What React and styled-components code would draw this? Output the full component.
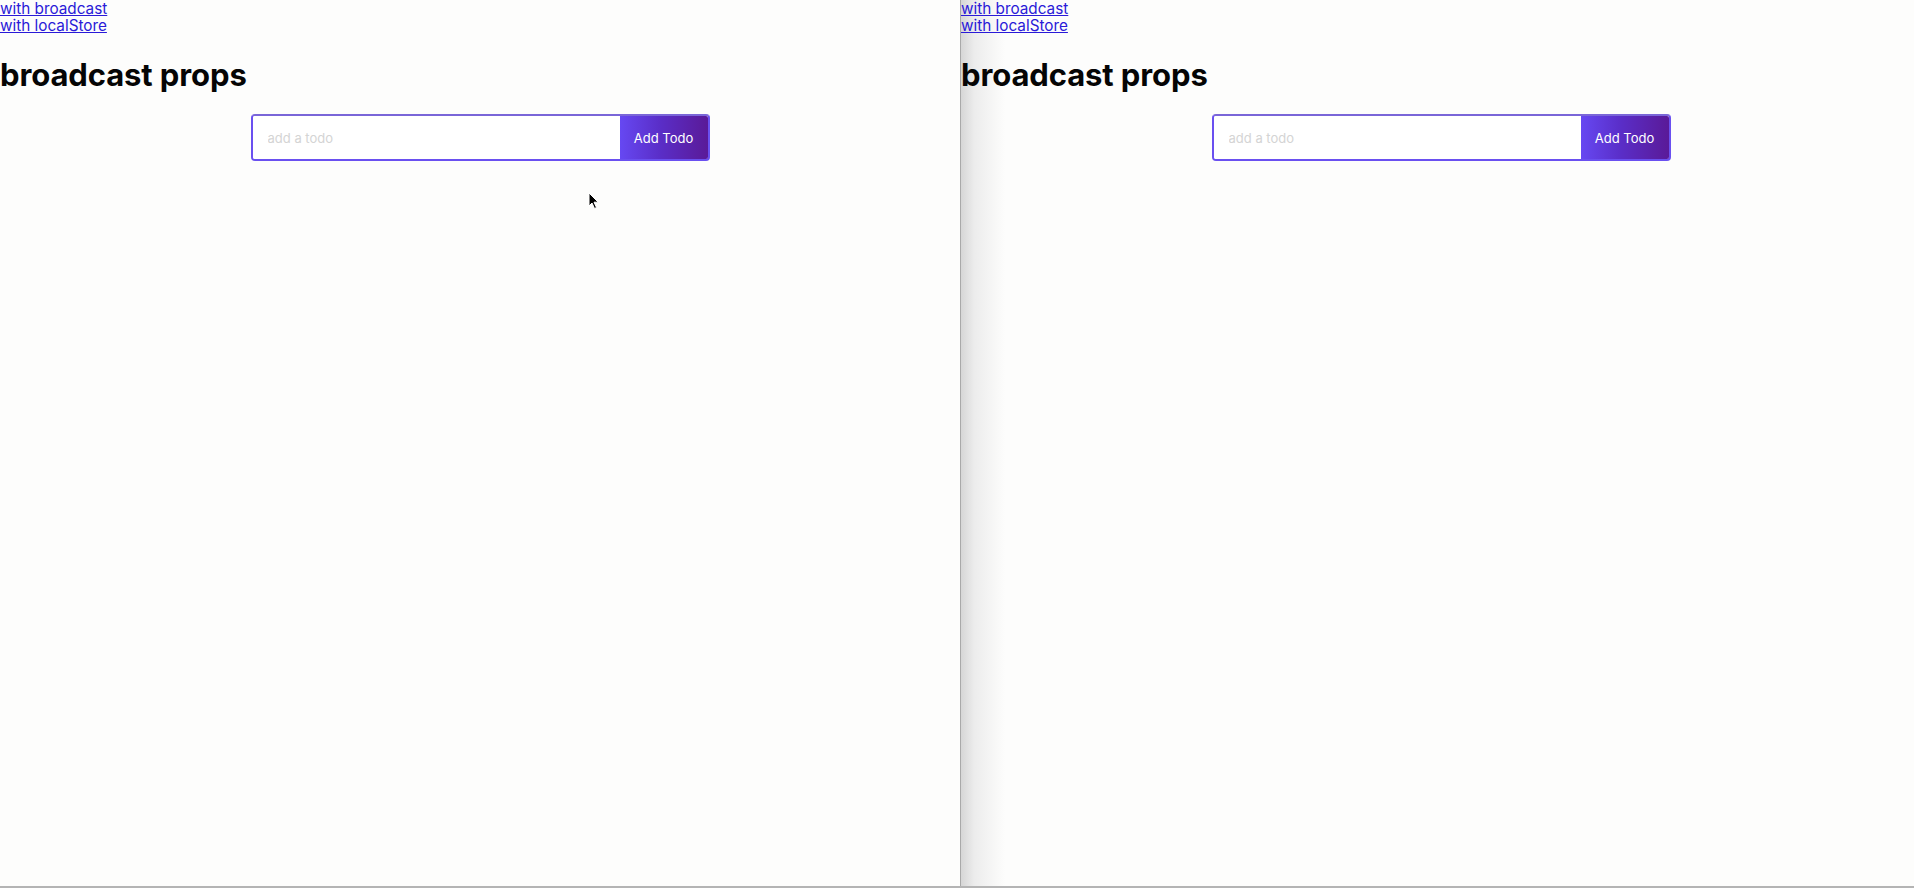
import React from 'react'
import styled, { createGlobalStyle } from 'styled-components'

const GlobalStyle = createGlobalStyle`
    html, body {
        margin: 0;
        padding: 0;
        background: #fdfdfc;
        font-family: Inter, "Noto Sans", sans-serif;
    }
`

const Screen = styled.div`
    display: flex;
    width: 1914px;
    height: 888px;
    overflow: hidden;
    box-sizing: border-box;
    border-bottom: 2px solid #b4b4b4;
    position: relative;
`

const Pane = styled.div`
    flex: 0 0 ${p => p.$width}px;
    position: relative;
    background: #fdfdfc;
    overflow: hidden;
    border-left: ${p => p.$shaded ? '1px solid #a9a9a9' : 'none'};
    box-sizing: border-box;

    &::before {
        content: '';
        display: ${p => p.$shaded ? 'block' : 'none'};
        position: absolute;
        left: 0;
        top: 0;
        bottom: 0;
        width: 44px;
        background: linear-gradient(90deg, #d6d6d6 0%, #ececec 30%, rgba(253,253,252,0) 100%);
        pointer-events: none;
    }
`

const Inner = styled.div`
    width: 960px;
    position: relative;
`

const Nav = styled.nav`
    display: flex;
    flex-direction: column;
`

const NavLink = styled.a`
    color: #2a1ad8;
    font-size: 15.3px;
    line-height: 17px;
    text-decoration: underline;
    width: max-content;
`

const Title = styled.h1`
    font-size: 31px;
    font-weight: 700;
    margin: 22px 0 0;
    line-height: 37px;
    color: #050505;
    letter-spacing: -0.1px;
`

const Form = styled.form`
    display: flex;
    width: 459px;
    height: 47px;
    margin: 21px auto 0;
    box-sizing: border-box;
    border: 2px solid #6a50f0;
    border-top-color: #7a66d8;
    border-radius: 4px;
    overflow: hidden;
    background: #fff;
`

const TodoInput = styled.input`
    flex: 1;
    border: none;
    outline: none;
    padding: 0 0 0 15px;
    font-family: Inter, sans-serif;
    font-size: 13px;
    color: #333;
    background: #fff;

    &::placeholder {
        color: #d4d4d4;
    }
`

const AddButton = styled.button`
    flex: 0 0 88px;
    border: none;
    color: #fff;
    font-family: Inter, sans-serif;
    font-size: 13px;
    background: linear-gradient(90deg, #6648f2 0%, #5a2ec8 45%, #5a1a98 100%);
    cursor: pointer;
`

const Pointer = styled.svg`
    position: absolute;
    left: 588px;
    top: 192px;
    width: 12px;
    height: 18px;
`

const Window = ({ width, shaded, showPointer, focused }) => (
    <Pane $width={width} $shaded={shaded}>
        <Inner>
            <Nav>
                <NavLink href="#broadcast">with broadcast</NavLink>
                <NavLink href="#local">with localStore</NavLink>
            </Nav>
            <Title>broadcast props</Title>
            <Form onSubmit={e => e.preventDefault()}>
                <TodoInput placeholder="add a todo" autoFocus={focused} />
                <AddButton type="submit">Add Todo</AddButton>
            </Form>
            {showPointer && (
                <Pointer viewBox="0 0 12 18">
                    <path d="M1 1 L1 14 L4 11 L6.5 16.5 L8.5 15.5 L6 10.2 L10.2 10.2 Z" fill="#000" stroke="#fff" strokeWidth="1" />
                </Pointer>
            )}
        </Inner>
    </Pane>
)

const App = () => {
    return (
        <>
            <GlobalStyle />
            <Screen>
                <Window width={960} showPointer focused />
                <Window width={954} shaded />
            </Screen>
        </>
    )
}

export default App
